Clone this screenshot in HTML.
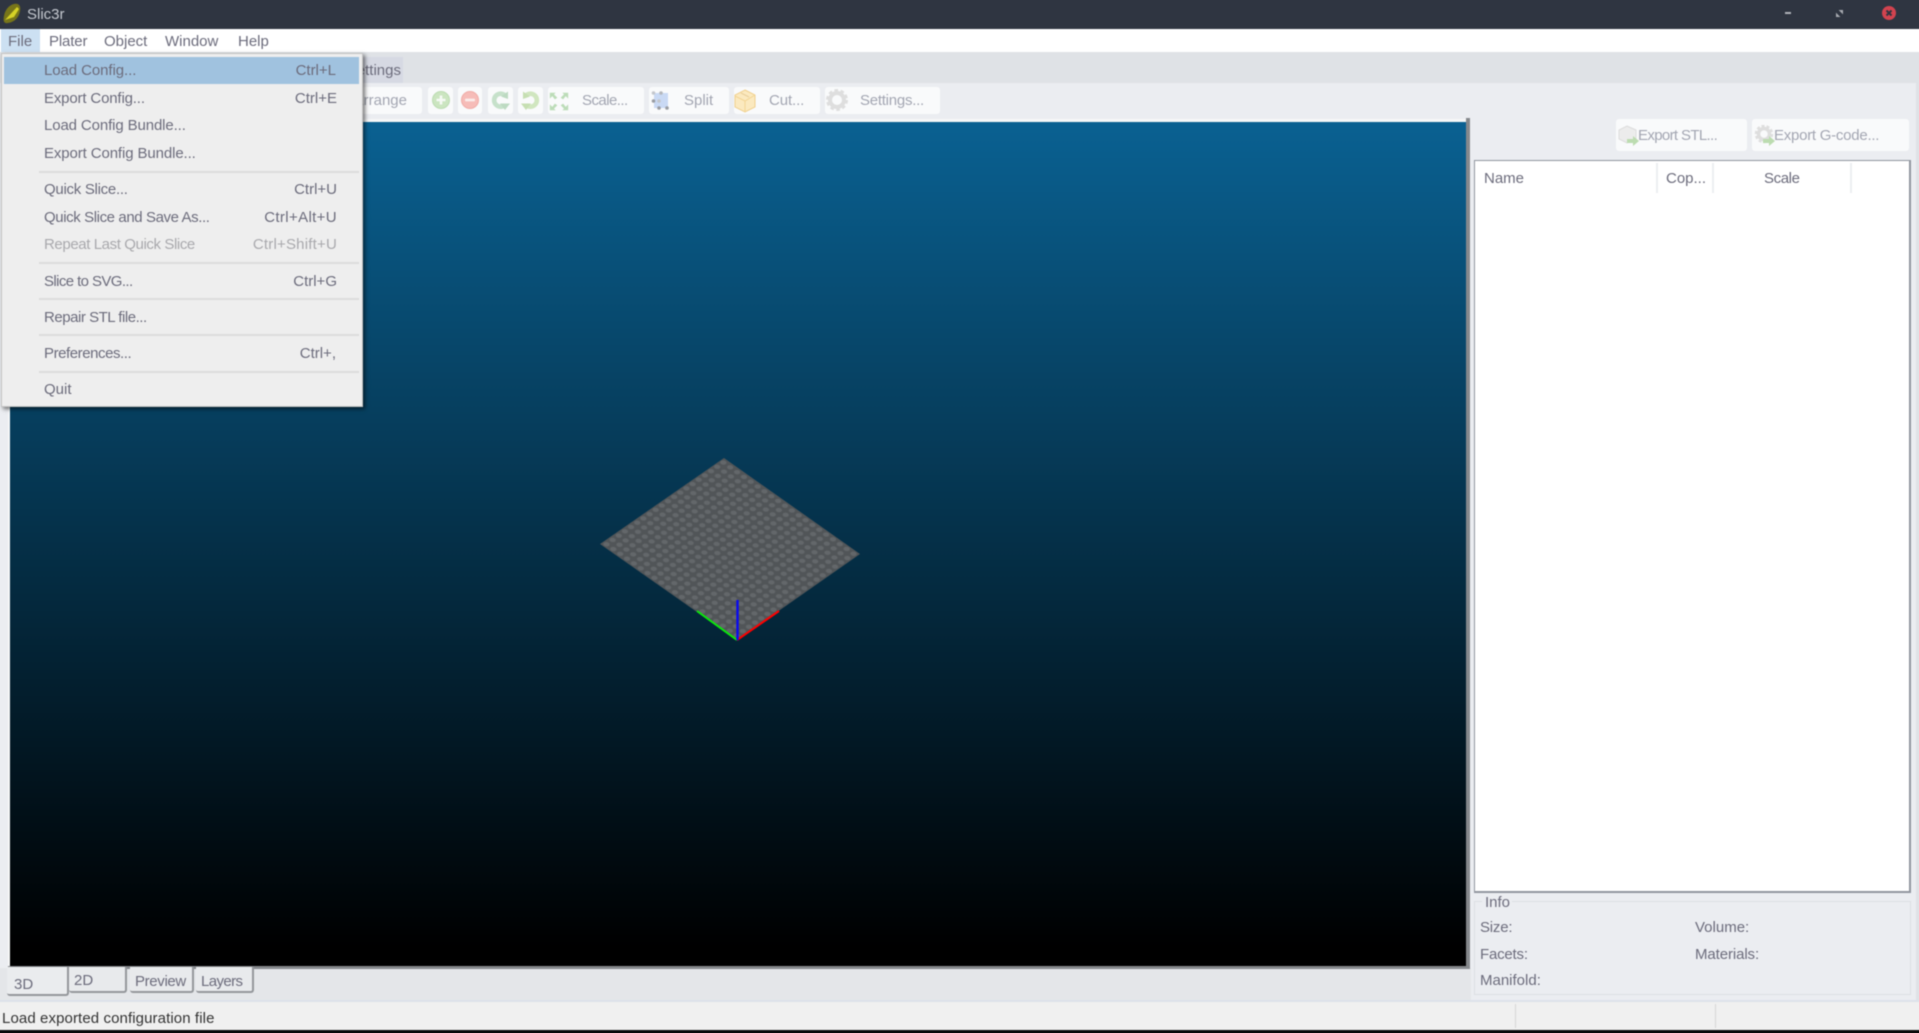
<!DOCTYPE html>
<html><head><meta charset="utf-8"><title>Slic3r</title>
<style>
html,body{margin:0;padding:0;width:1919px;height:1033px;overflow:hidden;background:#000}
#r{position:relative;width:1919px;height:1033px;font-family:"Liberation Sans",sans-serif;font-size:15px;color:#6c6c7c;filter:blur(.45px)}
#r div,#r span.t,#r svg{position:absolute}
.t{position:absolute;line-height:18px;white-space:nowrap;margin-top:1px}
.b{background:#f9fafb;border-radius:3px;top:87px;height:27px}
.bt{color:#a3a6b2;top:91px}
.sep{left:39px;width:320px;height:2px;background:#dcdcdc}
.tab{background:#eceef0;border-right:2px solid #94979b;border-bottom:2px solid #94979b;border-radius:0 0 3px 3px;box-sizing:border-box}
.v{width:2px;background:#eceef1;top:163px;height:30px}
</style></head><body>
<div id="r">
<!-- title bar -->
<div style="left:-10px;top:-10px;width:1940px;height:39px;background:#2f3541"></div>
<svg style="left:3px;top:3px" width="18" height="21" viewBox="0 0 18 21"><path d="M11 1C16 0 18 3 17 8C16 14 12 19 5 20C1 21 0 18 1 13C2 7 6 2 11 1Z" fill="#77751a"/><path d="M2 17L14 4L16 6L11 14Z" fill="#d6d226"/></svg>
<span class="t" style="left:27px;top:6px;color:#c4c8cf;margin-top:0">Slic3r</span>
<div style="left:1785px;top:12px;width:6px;height:2px;background:#b0b3b9"></div>
<svg style="left:1836px;top:10px" width="7" height="7" viewBox="0 0 8 8"><path d="M3 0H8V5ZM0 3L5 8H0Z" fill="#a8abb1"/></svg>
<svg style="left:1882px;top:6px" width="14" height="14" viewBox="0 0 14 14"><circle cx="7" cy="7" r="7" fill="#d2434f"/><path d="M4.5 4.5L9.5 9.5M9.5 4.5L4.5 9.5" stroke="#2f3541" stroke-width="2"/></svg>
<!-- menu bar -->
<div style="left:-10px;top:29px;width:1940px;height:23px;background:#fff"></div>
<div style="left:1px;top:29px;width:39px;height:23px;background:#cce0f2"></div>
<span class="t" style="left:8px;top:32px">File</span>
<span class="t" style="left:49px;top:32px;letter-spacing:-.15px">Plater</span>
<span class="t" style="left:104px;top:32px">Object</span>
<span class="t" style="left:165px;top:32px">Window</span>
<span class="t" style="left:238px;top:32px">Help</span>
<!-- tabs strip -->
<div style="left:-10px;top:52px;width:1940px;height:950px;background:#dfe2e6"></div>
<div style="left:300px;top:57px;width:103px;height:26px;background:#d6d9e3"></div>
<span class="t" style="right:1518px;top:61px;color:#6c6c7c">Settings</span>
<!-- panel -->
<div style="left:-10px;top:83px;width:1926px;height:885px;background:#ebedf1"></div>
<div style="left:-10px;top:968px;width:1481px;height:32px;background:#e4e6e9"></div>
<div style="left:1471px;top:968px;width:445px;height:32px;background:#ebedf1"></div>
<div style="left:-10px;top:1000px;width:1940px;height:2px;background:#dde2ea"></div>
<!-- toolbar -->
<div class="b" style="left:350px;width:72px"></div><span class="t bt" style="right:1512px">Arrange</span>
<div class="b" style="left:428px;width:25px"></div>
<svg style="left:431px;top:90px" width="20" height="20" viewBox="0 0 20 20"><circle cx="10" cy="10" r="8.5" fill="#cbe5c0" stroke="#bcdcb2"/><path d="M10 5.5V14.5M5.5 10H14.5" stroke="#f6faf5" stroke-width="2.6"/></svg>
<div class="b" style="left:458px;width:24px"></div>
<svg style="left:460px;top:90px" width="20" height="20" viewBox="0 0 20 20"><circle cx="10" cy="10" r="8.5" fill="#f6bcb8" stroke="#f0aca7"/><rect x="5" y="8.6" width="10" height="2.8" rx="1" fill="#fbecea"/></svg>
<div class="b" style="left:488px;width:25px"></div>
<svg style="left:491px;top:90px" width="20" height="21" viewBox="0 0 20 21"><path d="M15 6.5A6.5 6.5 0 1 0 14 15" fill="none" stroke="#c6e1ca" stroke-width="4.6"/><path d="M9 13.5H19L14 20Z M10 6.5L17 1.5V9Z" fill="#bddac2"/></svg>
<div class="b" style="left:518px;width:25px"></div>
<svg style="left:520px;top:90px" width="20" height="21" viewBox="0 0 20 21"><path d="M5 6.5A6.5 6.5 0 1 1 6 15" fill="none" stroke="#d0e6bf" stroke-width="4.6"/><path d="M11 13.5H1L6 20Z M10 6.5L3 1.5V9Z" fill="#c6dfb2"/></svg>
<div class="b" style="left:548px;width:96px"></div>
<svg style="left:549px;top:91px" width="20" height="21" viewBox="0 0 24 25"><g fill="#bcdcb8"><path d="M1 2H8L6 4L10 8L7 10L4 6L1 9Z"/><path d="M23 2H16L18 4L14 8L17 10L20 6L23 9Z"/><path d="M1 23H8L6 21L10 17L7 15L4 19L1 16Z"/><path d="M23 23H16L18 21L14 17L17 15L20 19L23 16Z"/></g></svg>
<span class="t bt" style="left:582px;letter-spacing:-.55px">Scale...</span>
<div class="b" style="left:649px;width:80px"></div>
<svg style="left:650px;top:90px" width="20" height="20" viewBox="0 0 20 20"><rect x="4" y="3" width="14" height="15" fill="#c9d9f4"/><g fill="#9a9da3"><circle cx="3.5" cy="3" r="1.8" fill="#c4c7cc"/><circle cx="11" cy="3" r="1.8" fill="#b4b7bc"/><circle cx="3.5" cy="11" r="1.8"/><circle cx="9" cy="11" r="1.8" fill="#c4c7cc"/><circle cx="9" cy="18" r="1.8"/><circle cx="17" cy="18" r="1.8"/></g></svg>
<span class="t bt" style="left:684px">Split</span>
<div class="b" style="left:734px;width:86px"></div>
<svg style="left:734px;top:89px" width="22" height="24" viewBox="0 0 22 24"><path d="M11 1L21 6V18L11 23L1 18V6Z" fill="#fbe9bf" stroke="#f0d08e"/><path d="M1 7L11 12L21 6M11 12V23" fill="none" stroke="#f2d594"/><path d="M7 4L15 8" stroke="#e8cd9a"/></svg>
<span class="t bt" style="left:769px;letter-spacing:-.1px">Cut...</span>
<div class="b" style="left:825px;width:115px"></div>
<svg style="left:826px;top:89px" width="22" height="22" viewBox="0 0 22 22"><circle cx="11" cy="11" r="7" fill="none" stroke="#dedede" stroke-width="4"/><circle cx="11" cy="11" r="9.5" fill="none" stroke="#dedede" stroke-width="3" stroke-dasharray="3.5 2.5"/></svg>
<span class="t bt" style="left:860px;letter-spacing:-.25px">Settings...</span>
<!-- canvas frame -->
<div style="left:8px;top:119px;width:1462px;height:850px;background:#f6f7f8"></div>
<div style="left:1466px;top:118px;width:4px;height:851px;background:#85888c"></div>
<div style="left:8px;top:966px;width:1462px;height:3px;background:#85888c"></div>
<div style="left:10px;top:122px;width:1456px;height:844px;background:linear-gradient(#0a6192 0%,#000 98%)"></div>
<svg style="left:590px;top:450px" width="280" height="200" viewBox="590 450 280 200">
<defs><pattern id="g" width="1" height="1" patternUnits="userSpaceOnUse" patternTransform="matrix(6.15 -4.3 -6.85 -4.8 737 640)"><rect width="1" height="1" fill="#515558"/><rect x=".16" y=".16" width=".68" height=".68" rx=".34" fill="#63676a"/></pattern></defs>
<polygon points="724,458 860,554 737,640 600,544" fill="url(#g)"/>
<path d="M697 611L737 640" stroke="#0be80b" stroke-width="2"/>
<path d="M779 611L737 640" stroke="#f00" stroke-width="2"/>
<path d="M737.5 600V640" stroke="#0a0af0" stroke-width="2.4"/>
</svg>
<!-- bottom tabs -->
<div class="tab" style="left:7px;top:967px;width:62px;height:29px;background:#eaecee"></div><span class="t" style="left:14px;top:975px">3D</span>
<div class="tab" style="left:69px;top:967px;width:58px;height:26px;background:#e8eaec"></div><span class="t" style="left:74px;top:971px">2D</span>
<div class="tab" style="left:130px;top:967px;width:64px;height:26px;background:#e8eaec"></div><span class="t" style="left:135px;top:972px;letter-spacing:-.35px">Preview</span>
<div class="tab" style="left:196px;top:967px;width:58px;height:26px;background:#e8eaec"></div><span class="t" style="left:201px;top:972px;letter-spacing:-.6px">Layers</span>
<!-- right column -->
<div class="b" style="left:1616px;top:119px;width:131px;height:32px"></div>
<svg style="left:1618px;top:125px" width="22" height="22" viewBox="0 0 22 22"><path d="M9 1L18 5V14L9 18L1 14V5Z" fill="#ececec" stroke="#dcdcdc"/><path d="M9 14H15V11L21 16L15 21V18H9Z" fill="#bcdcb0"/></svg>
<span class="t bt" style="left:1638px;top:126px;letter-spacing:-.65px">Export STL...</span>
<div class="b" style="left:1752px;top:119px;width:157px;height:32px"></div>
<svg style="left:1754px;top:125px" width="22" height="22" viewBox="0 0 22 22"><circle cx="10" cy="9" r="5.5" fill="none" stroke="#dedede" stroke-width="3.5"/><circle cx="10" cy="9" r="8" fill="none" stroke="#dedede" stroke-width="2.5" stroke-dasharray="3 2"/><path d="M9 14H15V11L21 16L15 21V18H9Z" fill="#bcdcb0"/></svg>
<span class="t bt" style="left:1774px;top:126px;letter-spacing:-.25px">Export G-code...</span>
<div style="left:1474px;top:160px;width:434px;height:730px;background:#fff;border:2px solid #91969f;border-width:1.5px 2px 2px 1.5px"></div>
<span class="t" style="left:1484px;top:169px">Name</span>
<span class="t" style="left:1666px;top:169px">Cop...</span>
<span class="t" style="left:1764px;top:169px;letter-spacing:-.4px">Scale</span>
<div class="v" style="left:1656px"></div><div class="v" style="left:1712px"></div><div class="v" style="left:1850px"></div>
<div style="left:1474px;top:901px;width:435px;height:92px;border:1px solid #dcdfe3"></div>
<div style="left:1482px;top:895px;width:30px;height:14px;background:#ebedf1"></div>
<span class="t" style="left:1485px;top:893px">Info</span>
<span class="t" style="left:1480px;top:918px;letter-spacing:-.2px">Size:</span>
<span class="t" style="left:1480px;top:945px;letter-spacing:-.2px">Facets:</span>
<span class="t" style="left:1480px;top:971px">Manifold:</span>
<span class="t" style="left:1695px;top:918px">Volume:</span>
<span class="t" style="left:1695px;top:945px;letter-spacing:-.1px">Materials:</span>
<!-- status bar -->
<div style="left:-10px;top:1002px;width:1940px;height:28px;background:#f0f0f0"></div>
<div style="left:1515px;top:1004px;width:1px;height:24px;background:#d6d6d6"></div>
<div style="left:1715px;top:1004px;width:1px;height:24px;background:#d6d6d6"></div>
<span class="t" style="left:2px;top:1009px;color:#333;letter-spacing:.1px">Load exported configuration file</span>
<div style="left:-10px;top:1030px;width:1940px;height:13px;background:#0a0a0a"></div>
<!-- file menu -->
<div style="left:1px;top:53px;width:362px;height:354px;background:#eeeeee;border:1px solid #c4c4c4;box-sizing:border-box;box-shadow:2px 2px 4px rgba(0,0,0,.55)"></div>
<div style="left:4px;top:57px;width:355px;height:27px;background:#a0c2df"></div>
<span class="t" style="left:44px;top:61px;letter-spacing:-.08px">Load Config...</span><span class="t" style="right:1583px;top:61px">Ctrl+L</span>
<span class="t" style="left:44px;top:89px;letter-spacing:-.16px">Export Config...</span><span class="t" style="right:1582px;top:89px">Ctrl+E</span>
<span class="t" style="left:44px;top:116px;letter-spacing:-.12px">Load Config Bundle...</span>
<span class="t" style="left:44px;top:144px;letter-spacing:-.11px">Export Config Bundle...</span>
<div class="sep" style="top:171px"></div>
<span class="t" style="left:44px;top:180px;letter-spacing:-.28px">Quick Slice...</span><span class="t" style="right:1582px;top:180px">Ctrl+U</span>
<span class="t" style="left:44px;top:208px;letter-spacing:-.4px">Quick Slice and Save As...</span><span class="t" style="right:1582px;top:208px;letter-spacing:.36px">Ctrl+Alt+U</span>
<span class="t" style="left:44px;top:235px;color:#a9a9ad;letter-spacing:-.4px">Repeat Last Quick Slice</span><span class="t" style="right:1582px;top:235px;color:#a9a9ad;letter-spacing:.2px">Ctrl+Shift+U</span>
<div class="sep" style="top:262px"></div>
<span class="t" style="left:44px;top:272px;letter-spacing:-.6px">Slice to SVG...</span><span class="t" style="right:1582px;top:272px">Ctrl+G</span>
<div class="sep" style="top:298px"></div>
<span class="t" style="left:44px;top:308px;letter-spacing:-.47px">Repair STL file...</span>
<div class="sep" style="top:334px"></div>
<span class="t" style="left:44px;top:344px;letter-spacing:-.44px">Preferences...</span><span class="t" style="right:1583px;top:344px">Ctrl+,</span>
<div class="sep" style="top:371px"></div>
<span class="t" style="left:44px;top:380px">Quit</span>
</div>
</body></html>
